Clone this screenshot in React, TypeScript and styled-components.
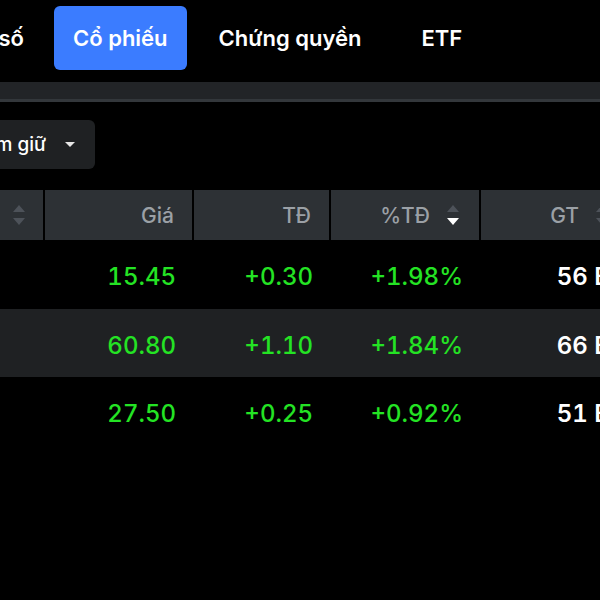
import styled, { createGlobalStyle } from "styled-components";

const GlobalStyle = createGlobalStyle`
  html, body {
    margin: 0;
    padding: 0;
    background: #000;
  }
  body {
    font-family: Inter, "Noto Sans", "Liberation Sans", sans-serif;
  }
`;

const Page = styled.div`
  width: 600px;
  height: 600px;
  overflow: hidden;
  background: #000;
  display: flex;
  flex-direction: column;
`;

const TabsRow = styled.div`
  display: flex;
  align-items: center;
  height: 64px;
  margin-top: 6px;
  white-space: nowrap;
`;

/* shows only the right part of what it holds, the rest runs off the left edge */
const Clip = styled.div<{ $width: number }>`
  flex: none;
  width: ${(p) => p.$width}px;
  display: flex;
  justify-content: flex-end;
  overflow: hidden;
`;

const Tab = styled.div<{ $active?: boolean; $gap?: number }>`
  flex: none;
  height: 64px;
  display: flex;
  align-items: center;
  padding: 0 19px;
  margin-left: ${(p) => p.$gap ?? 0}px;
  border-radius: 6px;
  background: ${(p) => (p.$active ? "#3b7cff" : "transparent")};
  color: #fff;
  font-size: 22px;
  font-weight: 600;
`;

const Bar = styled.div`
  height: 17px;
  margin-top: 12px;
  background: #222427;
  border-bottom: 3px solid #33373b;
`;

const FilterRow = styled.div`
  margin-top: 18px;
  display: flex;
`;

const Dropdown = styled.div`
  flex: none;
  height: 49px;
  display: flex;
  align-items: center;
  gap: 19px;
  padding: 0 20px 0 16px;
  border-radius: 6px;
  background: #1f2123;
  color: #fff;
  font-size: 19px;
  font-weight: 500;
  white-space: nowrap;
`;

const Caret = styled.span`
  width: 0;
  height: 0;
  border-left: 5px solid transparent;
  border-right: 5px solid transparent;
  border-top: 5px solid #e6e6e6;
`;

const Table = styled.div`
  margin-top: 21px;
  display: flex;
  flex-direction: column;
`;

const Grid = styled.div<{ $bg?: string; $h: number }>`
  display: grid;
  grid-template-columns: 43px 147px 135px 148px 147px;
  column-gap: 2px;
  height: ${(p) => p.$h}px;
  background: ${(p) => p.$bg ?? "transparent"};
`;

const HeadCell = styled.div<{ $pr?: number }>`
  display: flex;
  align-items: center;
  justify-content: flex-end;
  gap: 17px;
  padding-right: ${(p) => p.$pr ?? 18}px;
  background: #2d3135;
  color: #9ba0a6;
  font-size: 21px;
  font-weight: 500;
  white-space: nowrap;
  overflow: hidden;
`;

const Cell = styled.div<{ $color?: string; $pr?: number; $bold?: boolean }>`
  display: flex;
  align-items: center;
  justify-content: flex-end;
  padding: 4px ${(p) => p.$pr ?? 16}px 0 0;
  color: ${(p) => p.$color ?? "#24e324"};
  font-size: 24px;
  font-weight: ${(p) => (p.$bold ? 600 : 500)};
  font-variant-numeric: tabular-nums;
  white-space: nowrap;
`;

const SortIcon = ({ active }: { active?: "down" | "up" }) => (
  <svg width="12" height="21" viewBox="0 0 12 21" style={{ flex: "none" }}>
    <polygon points="6,0 12,7 0,7" fill={active === "up" ? "#fff" : "#4d5259"} />
    <polygon points="0,13 12,13 6,20" fill={active === "down" ? "#fff" : "#4d5259"} />
  </svg>
);

type Row = { price: string; ch: string; pct: string; gt: string };

const rows: Row[] = [
  { price: "15.45", ch: "+0.30", pct: "+1.98%", gt: "56 B" },
  { price: "60.80", ch: "+1.10", pct: "+1.84%", gt: "66 B" },
  { price: "27.50", ch: "+0.25", pct: "+0.92%", gt: "51 B" },
];

export default function App() {
  return (
    <>
      <GlobalStyle />
      <Page>
        <TabsRow>
          <Clip $width={43}>
            <Tab>Chỉ số</Tab>
          </Clip>
          <Tab $active $gap={11}>Cổ phiếu</Tab>
          <Tab $gap={13}>Chứng quyền</Tab>
          <Tab $gap={22}>ETF</Tab>
        </TabsRow>
        <Bar />
        <FilterRow>
          <Clip $width={95}>
            <Dropdown>
              Đang nắm giữ
              <Caret />
            </Dropdown>
          </Clip>
        </FilterRow>
        <Table>
          <Grid $h={50} $bg="#000">
            <HeadCell>
              Mã
              <SortIcon />
            </HeadCell>
            <HeadCell>Giá</HeadCell>
            <HeadCell>TĐ</HeadCell>
            <HeadCell $pr={20}>
              %TĐ
              <SortIcon active="down" />
            </HeadCell>
            <HeadCell $pr={20}>
              GT
              <SortIcon />
            </HeadCell>
          </Grid>
          {rows.map((r, i) => (
            <Grid key={i} $h={i === 0 ? 69 : 68} $bg={i === 1 ? "#1f2123" : "#000"}>
              <Cell />
              <Cell>{r.price}</Cell>
              <Cell>{r.ch}</Cell>
              <Cell>{r.pct}</Cell>
              <Cell $color="#fff" $pr={18} $bold>
                {r.gt}
              </Cell>
            </Grid>
          ))}
        </Table>
      </Page>
    </>
  );
}
